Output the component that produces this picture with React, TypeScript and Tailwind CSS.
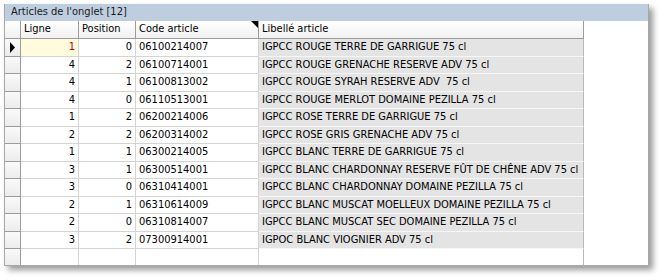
import React from 'react';

type Row = { ligne: number; position: number; code: string; libelle: string };

const rows: Row[] = [
    { ligne: 1, position: 0, code: '06100214007', libelle: 'IGPCC ROUGE TERRE DE GARRIGUE 75 cl' },
    { ligne: 4, position: 2, code: '06100714001', libelle: 'IGPCC ROUGE GRENACHE RESERVE ADV 75 cl' },
    { ligne: 4, position: 1, code: '06100813002', libelle: 'IGPCC ROUGE SYRAH RESERVE ADV  75 cl' },
    { ligne: 4, position: 0, code: '06110513001', libelle: 'IGPCC ROUGE MERLOT DOMAINE PEZILLA 75 cl' },
    { ligne: 1, position: 2, code: '06200214006', libelle: 'IGPCC ROSE TERRE DE GARRIGUE 75 cl' },
    { ligne: 2, position: 2, code: '06200314002', libelle: 'IGPCC ROSE GRIS GRENACHE ADV 75 cl' },
    { ligne: 1, position: 1, code: '06300214005', libelle: 'IGPCC BLANC TERRE DE GARRIGUE 75 cl' },
    { ligne: 3, position: 1, code: '06300514001', libelle: 'IGPCC BLANC CHARDONNAY RESERVE FÛT DE CHÊNE ADV 75 cl' },
    { ligne: 3, position: 0, code: '06310414001', libelle: 'IGPCC BLANC CHARDONNAY DOMAINE PEZILLA 75 cl' },
    { ligne: 2, position: 1, code: '06310614009', libelle: 'IGPCC BLANC MUSCAT MOELLEUX DOMAINE PEZILLA 75 cl' },
    { ligne: 2, position: 0, code: '06310814007', libelle: 'IGPCC BLANC MUSCAT SEC DOMAINE PEZILLA 75 cl' },
    { ligne: 3, position: 2, code: '07300914001', libelle: 'IGPOC BLANC VIOGNIER ADV 75 cl' },
];

const Indicator = ({ active }: { active?: boolean }) => (
    <div className="w-[16px] shrink-0 flex items-center justify-center bg-gradient-to-b from-[#fafafa] to-[#ececec] border-r border-b border-[#9c9c9c]">
        {active && (
            <svg width="7" height="11" viewBox="0 0 7 11">
                <path d="M1 0 L6 5.5 L1 11 Z" fill="#000" />
            </svg>
        )}
    </div>
);

const HeaderCell = ({
    children,
    className,
    marker,
}: {
    children: React.ReactNode;
    className: string;
    marker?: boolean;
}) => (
    <div
        className={`relative shrink-0 flex items-center pl-[3px] bg-gradient-to-b from-white to-[#f1f1f1] border-r border-b border-[#9c9c9c] ${className}`}
    >
        {children}
        {marker && (
            <svg className="absolute right-0 top-0" width="7" height="7" viewBox="0 0 7 7">
                <path d="M0 0 L7 0 L7 7 Z" fill="#000" />
            </svg>
        )}
    </div>
);

export default function App() {
    return (
        <div
            className="w-[664px] h-[280px] bg-white text-[11px] text-black"
            style={{ fontFamily: '"DejaVu Sans Condensed", "Liberation Sans", sans-serif' }}
        >
            <div className="ml-[4px] pt-[4px]">
                <div className="w-[645px] h-[262px] flex flex-col bg-white border-l border-r border-b border-[#a8a8a8] shadow-[4px_4px_6px_rgba(0,0,0,0.4)]">
                    <div className="h-[17px] shrink-0 flex items-center pl-[6px] bg-[#bfcede] text-[#1a1a1a] text-[11px]">
                        Articles de l'onglet [12]
                    </div>
                    <div className="flex h-[18px] shrink-0">
                        <div className="w-[16px] shrink-0 bg-gradient-to-b from-white to-[#f1f1f1] border-r border-b border-[#9c9c9c]" />
                        <HeaderCell className="w-[58px]">Ligne</HeaderCell>
                        <HeaderCell className="w-[57px]">Position</HeaderCell>
                        <HeaderCell className="w-[123px]" marker>
                            Code article
                        </HeaderCell>
                        <HeaderCell className="w-[325px]">Libellé article</HeaderCell>
                    </div>
                    {rows.map((r, i) => (
                        <div key={i} className="flex h-[17.5px] shrink-0">
                            <Indicator active={i === 0} />
                            <div
                                className={`w-[58px] shrink-0 flex items-center justify-end pr-[3px] border-r border-b border-[#d4d4d4] ${
                                    i === 0 ? 'bg-[#fffbdc] text-[#c00000]' : ''
                                }`}
                            >
                                {r.ligne}
                            </div>
                            <div className="w-[57px] shrink-0 flex items-center justify-end pr-[3px] border-r border-b border-[#d4d4d4]">
                                {r.position}
                            </div>
                            <div className="w-[123px] shrink-0 flex items-center pl-[3px] border-r border-b border-[#d4d4d4]">
                                {r.code}
                            </div>
                            <div className="w-[325px] shrink-0 flex items-center pl-[3px] whitespace-pre bg-[#e4e4e4] border-r border-r-[#b8b8b8] border-b border-b-[#f6f6f6]">
                                {r.libelle}
                            </div>
                        </div>
                    ))}
                    <div className="flex flex-1">
                        <div className="w-[16px] shrink-0 bg-gradient-to-b from-[#fafafa] to-[#ececec] border-r border-[#9c9c9c]" />
                        <div className="w-[58px] shrink-0 border-r border-[#d4d4d4]" />
                        <div className="w-[57px] shrink-0 border-r border-[#d4d4d4]" />
                        <div className="w-[123px] shrink-0 border-r border-[#d4d4d4]" />
                        <div className="w-[325px] shrink-0 border-r border-[#b8b8b8]" />
                    </div>
                </div>
            </div>
        </div>
    );
}
